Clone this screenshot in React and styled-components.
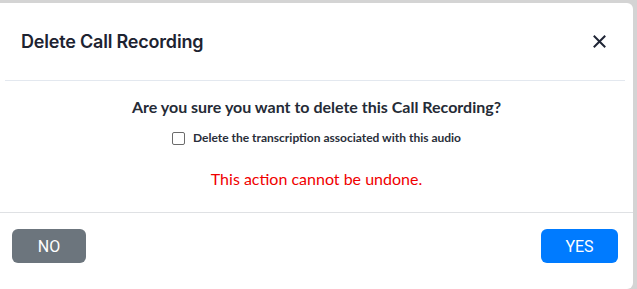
import React from "react";
import styled, { createGlobalStyle } from "styled-components";

const Global = createGlobalStyle`
  html, body { margin: 0; padding: 0; }
  body {
    background: #d4d4d4;
    width: 637px;
    height: 289px;
    overflow: hidden;
  }
`;

const Backdrop = styled.div`
  display: flex;
  padding-top: 3px;
  padding-right: 4px;
  height: 289px;
  box-sizing: border-box;
`;

const Modal = styled.div`
  flex: 1;
  background: #fff;
  border-radius: 0 6px 6px 0;
  display: flex;
  flex-direction: column;
  height: 286px;
`;

const Header = styled.div`
  display: flex;
  align-items: center;
  justify-content: space-between;
  height: 77px;
  margin: 0 8px 0 5px;
  padding: 0 19px 0 16px;
  border-bottom: 1px solid #e3e8ef;
`;

const Title = styled.h2`
  margin: 0;
  font-family: Inter, "Noto Sans", sans-serif;
  font-weight: 600;
  font-size: 18px;
  color: #1d2331;
  letter-spacing: -0.2px;
`;

const CloseButton = styled.button`
  border: 0;
  background: transparent;
  padding: 0;
  width: 14px;
  height: 14px;
  display: flex;
  align-items: center;
  justify-content: center;
  cursor: pointer;
`;

const Body = styled.div`
  display: flex;
  flex-direction: column;
  align-items: center;
  height: 132px;
  padding-top: 16px;
  box-sizing: border-box;
  border-bottom: 1px solid #dfe1e4;
  font-family: Lato, "Open Sans", sans-serif;
`;

const Question = styled.p`
  margin: 0;
  font-weight: 700;
  font-size: 16px;
  color: #252b36;
  line-height: 20px;
`;

const CheckRow = styled.label`
  display: flex;
  align-items: center;
  gap: 8px;
  margin-top: 13px;
  font-size: 12px;
  line-height: 16px;
  font-weight: 700;
  color: #2a2f3a;
`;

const Box = styled.span`
  width: 11px;
  height: 11px;
  border: 1px solid #6b6b6b;
  border-radius: 2px;
  background: #fff;
  display: inline-block;
`;

const Warning = styled.p`
  margin: 23px 0 0;
  font-size: 16px;
  font-weight: 400;
  color: #f00000;
  line-height: 20px;
`;

const Footer = styled.div`
  display: flex;
  justify-content: space-between;
  align-items: flex-start;
  padding: 16px 15px 0 12px;
`;

const Button = styled.button`
  height: 34px;
  width: ${(p) => p.$w}px;
  border: 0;
  border-radius: 6px;
  background: ${(p) => p.$bg};
  color: #fff;
  font-family: Roboto, "Liberation Sans", sans-serif;
  font-size: 16px;
  font-weight: 400;
  cursor: pointer;
  padding: 0;
`;

export default function App() {
  return (
    <>
      <Global />
      <Backdrop>
        <Modal>
          <Header>
            <Title>Delete Call Recording</Title>
            <CloseButton aria-label="Close">
              <svg width="13" height="13" viewBox="0 0 13 13">
                <path d="M1.5 1.5L11.5 11.5M11.5 1.5L1.5 11.5" stroke="#1f2535" strokeWidth="2" strokeLinecap="square" />
              </svg>
            </CloseButton>
          </Header>
          <Body>
            <Question>Are you sure you want to delete this Call Recording?</Question>
            <CheckRow>
              <Box />
              Delete the transcription associated with this audio
            </CheckRow>
            <Warning>This action cannot be undone.</Warning>
          </Body>
          <Footer>
            <Button $bg="#6c757d" $w={74}>NO</Button>
            <Button $bg="#007bff" $w={77}>YES</Button>
          </Footer>
        </Modal>
      </Backdrop>
    </>
  );
}
